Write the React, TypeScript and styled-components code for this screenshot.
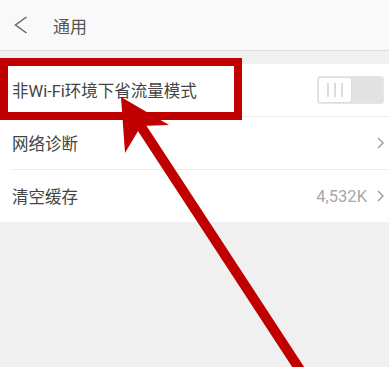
import React from "react";
import styled, { createGlobalStyle } from "styled-components";

const GlobalStyle = createGlobalStyle`
  html, body {
    margin: 0;
    padding: 0;
    background: #f0f0f0;
  }
  body {
    font-family: "Roboto", "Noto Sans CJK SC", sans-serif;
  }
`;

const Page = styled.div`
  position: relative;
  width: 389px;
  height: 367px;
  overflow: hidden;
  background: #f0f0f0;
`;

const Header = styled.header`
  height: 50px;
  display: flex;
  align-items: center;
  padding-left: 14px;
  gap: 25px;
  background: #f9f9f9;
  border-bottom: 1px solid #dcdcdc;
`;

const Title = styled.h1`
  margin: 0;
  font-size: 17px;
  font-weight: 400;
  color: #555;
  font-family: "Noto Sans CJK SC", sans-serif;
`;

const List = styled.ul`
  list-style: none;
  margin: 13px 0 0;
  padding: 0 0 0 12px;
  background: #fff;
`;

const Row = styled.li<{ $last?: boolean }>`
  height: 52px;
  display: flex;
  align-items: center;
  justify-content: space-between;
  padding-right: 5px;
  border-bottom: ${(p) => (p.$last ? "none" : "1px solid #ededed")};
`;

const Label = styled.span`
  font-size: 16.5px;
  color: #444;
  font-family: "Roboto", "Noto Sans CJK SC", sans-serif;
`;

const Extra = styled.div`
  display: flex;
  align-items: center;
  gap: 10px;
  font-size: 16.5px;
  color: #a8a8a8;
`;

const Toggle = styled.div`
  width: 67px;
  height: 28px;
  box-sizing: border-box;
  display: flex;
  border: 1px solid #e6e6e6;
  border-radius: 3px;
  background: #e2e2e2;
  overflow: hidden;
`;

const Knob = styled.div`
  width: 34px;
  height: 100%;
  box-sizing: border-box;
  display: flex;
  align-items: center;
  justify-content: center;
  gap: 5px;
  background: #fff;
  border: 1px solid #dedede;
  border-radius: 3px;

  & span {
    width: 2px;
    height: 14px;
    background: #dcdcdc;
  }
`;

const Overlay = styled.svg`
  position: absolute;
  left: 0;
  top: 0;
  pointer-events: none;
`;

const Chevron = () => (
  <svg width="7" height="12" viewBox="0 0 7 12">
    <polyline points="1,1 6,6 1,11" fill="none" stroke="#9a9a9a" strokeWidth="1.4" />
  </svg>
);

const BackIcon = () => (
  <svg width="14" height="18" viewBox="0 0 14 18">
    <polyline points="12.5,1 1.5,9 12.5,17" fill="none" stroke="#666" strokeWidth="1.5" />
  </svg>
);

const App = () => {
  return (
    <Page>
      <GlobalStyle />
      <Header>
        <BackIcon />
        <Title>通用</Title>
      </Header>
      <List>
        <Row>
          <Label>非Wi-Fi环境下省流量模式</Label>
          <Toggle>
            <Knob>
              <span />
              <span />
              <span />
            </Knob>
          </Toggle>
        </Row>
        <Row>
          <Label>网络诊断</Label>
          <Extra>
            <Chevron />
          </Extra>
        </Row>
        <Row $last>
          <Label>清空缓存</Label>
          <Extra>
            4,532K
            <Chevron />
          </Extra>
        </Row>
      </List>
      <Overlay width="389" height="367" viewBox="0 0 389 367">
        <rect x="4" y="62" width="234" height="54" fill="none" stroke="#c00000" strokeWidth="8" />
        <line x1="138" y1="122" x2="308" y2="382" stroke="#c00000" strokeWidth="10" />
        <polygon points="121,97 169,125 141,126 125,153" fill="#c00000" />
      </Overlay>
    </Page>
  );
};

export default App;
